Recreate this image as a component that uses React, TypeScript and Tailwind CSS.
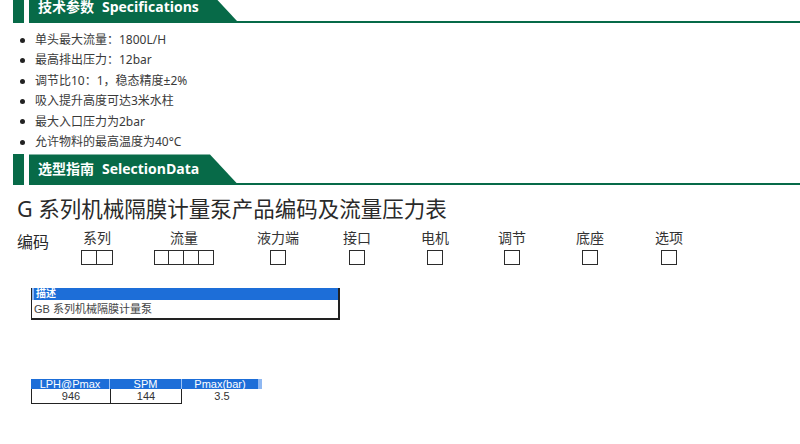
import React from 'react';

const specs = [
  '单头最大流量：1800L/H',
  '最高排出压力：12bar',
  '调节比10：1，稳态精度±2%',
  '吸入提升高度可达3米水柱',
  '最大入口压力为2bar',
  '允许物料的最高温度为40°C',
];

const columns = [
  { label: '系列', boxes: 2, cls: 'ml-0' },
  { label: '流量', boxes: 4, cls: 'ml-[27px]' },
  { label: '液力端', boxes: 1, cls: 'ml-[34px]' },
  { label: '接口', boxes: 1, cls: 'ml-[19px]' },
  { label: '电机', boxes: 1, cls: 'ml-[18px]' },
  { label: '调节', boxes: 1, cls: 'ml-[17px]' },
  { label: '底座', boxes: 1, cls: 'ml-[18px]' },
  { label: '选项', boxes: 1, cls: 'ml-[19px]' },
];

function SectionHeader({ cn, en, className }: { cn: string; en: string; className?: string }) {
  return (
    <div className={`flex pl-[13px] ${className ?? ''}`}>
      <div className="w-[11px] bg-[#076a48]" />
      <div className="ml-[5px] flex flex-1 flex-col">
        <div className="flex h-[29px] w-[208px] items-center bg-[#076a48] pl-[9px] [clip-path:polygon(0_0,181px_0,100%_100%,0_100%)]">
          <span className="text-[14px] font-bold text-white [font-family:'Open_Sans','Noto_Sans_CJK_SC',sans-serif]">
            {cn}
            <span className="ml-[8px]">{en}</span>
          </span>
        </div>
        <div className="h-[2px] bg-[#076a48]" />
      </div>
    </div>
  );
}

function CodeColumn({ label, boxes, cls }: { label: string; boxes: number; cls: string }) {
  const w = boxes === 4 ? 'w-[15px]' : 'w-[16px]';
  return (
    <div className={`flex w-[60px] flex-col items-center ${cls}`}>
      <div className="text-[14px] leading-[18px] text-[#333]">{label}</div>
      <div className="mt-[3px] flex">
        {Array.from({ length: boxes }).map((_, i) => (
          <div
            key={i}
            className={`h-[15px] ${w} border-[1.5px] border-[#2b2b2b] ${i > 0 ? 'border-l-0' : ''}`}
          />
        ))}
      </div>
    </div>
  );
}

export default function App() {
  return (
    <div className="h-[444px] w-[800px] overflow-hidden bg-white [font-family:'Noto_Sans','Noto_Sans_CJK_SC',sans-serif]">
      <SectionHeader cn="技术参数" en="Specifications" className="-mt-[8px] h-[31px]" />

      <ul className="mt-[7px]">
        {specs.map((s) => (
          <li key={s} className="flex items-center text-[12px] leading-[20.4px] text-[#3a3a3a]">
            <span className="ml-[20px] mr-[10px] h-[5px] w-[5px] rounded-full bg-[#222]" />
            {s}
          </li>
        ))}
      </ul>

      <SectionHeader cn="选型指南" en="SelectionData" className="mt-[2px] h-[31px]" />

      <div className="mt-[11px] pl-[17px] text-[21.5px] leading-[25px] text-[#2a2a2a]">
        G 系列机械隔膜计量泵产品编码及流量压力表
      </div>

      <div className="mt-[8px] flex items-start pl-[17px]">
        <div className="mt-[1px] w-[50px] text-[16px] leading-[24px] text-[#2a2a2a]">编码</div>
        {columns.map((c) => (
          <CodeColumn key={c.label} {...c} />
        ))}
      </div>

      <div className="ml-[31px] mt-[23px] w-[309px] border-r-2 border-b-2 border-l border-[#222] [font-family:'Liberation_Sans','Noto_Sans_CJK_SC',sans-serif]">
        <div className="flex h-[12px] items-center border-l-2 border-[#8fb8f2] bg-[#1d6ed8] pl-[2px] text-[10px] font-bold leading-[12px] text-white">
          描述
        </div>
        <div className="h-[18px] pl-[2px] text-[11px] leading-[18px] text-[#444]">
          GB 系列机械隔膜计量泵
        </div>
      </div>

      <div className="ml-[31px] mt-[59px] w-[231px] text-[11px] [font-family:'Liberation_Sans','Noto_Sans_CJK_SC',sans-serif]">
        <div className="flex h-[10px] bg-[#1d6ed8] leading-[10px] text-white">
          <div className="w-[79px] border-r border-[#9cc3f5] text-center">LPH@Pmax</div>
          <div className="w-[72px] border-r border-[#9cc3f5] text-center">SPM</div>
          <div className="flex-1 border-r-4 border-[#8fb8f2] text-center">Pmax(bar)</div>
        </div>
        <div className="flex h-[15px] leading-[14px] text-[#333]">
          <div className="w-[79px] border-b border-l border-[#222] text-center">946</div>
          <div className="w-[72px] border-b border-l border-r border-[#222] text-center">144</div>
          <div className="flex-1 text-center">3.5</div>
        </div>
      </div>
    </div>
  );
}
